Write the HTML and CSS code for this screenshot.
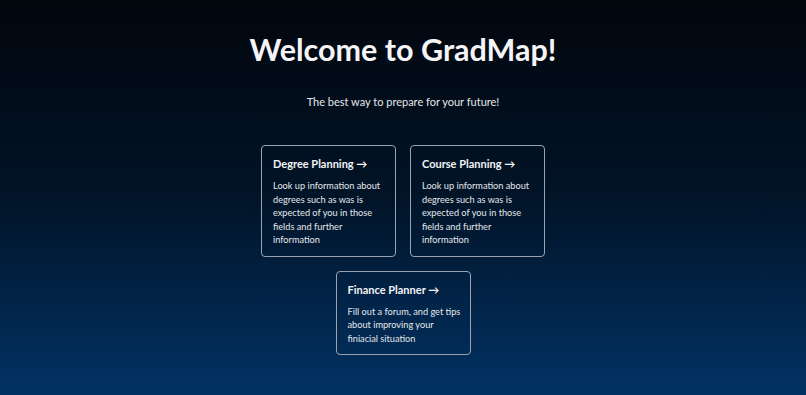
FILE: index.html
```html
<!DOCTYPE html>
<html lang="en">
<head>
    <meta charset="UTF-8">
    <meta name="viewport" content="width=device-width, initial-scale=1.0">
    <title>GradMap</title>
    <link rel="stylesheet" href="styles.css">
</head>
<body>
    <main class="home">
        <h1 class="title">Welcome to GradMap!</h1>
        <p class="tagline">The best way to prepare for your future!</p>
        <div class="cards">
            <a class="card" href="#">
                <h2>Degree Planning &rarr;</h2>
                <p>Look up information about degrees such as was is expected of you in those fields and further information</p>
            </a>
            <a class="card" href="#">
                <h2>Course Planning &rarr;</h2>
                <p>Look up information about degrees such as was is expected of you in those fields and further information</p>
            </a>
            <a class="card" href="#">
                <h2>Finance Planner &rarr;</h2>
                <p>Fill out a forum, and get tips about improving your finiacial situation</p>
            </a>
        </div>
    </main>
</body>
</html>
```

FILE: styles.css
```css
html, body {
    margin: 0;
    min-height: 100vh;
}
body {
    font-family: Lato, "Noto Sans", sans-serif;
    color: #f3f4f6;
    background: linear-gradient(to bottom, #02060d 0%, #011428 50%, #023264 100%);
}
.home {
    display: flex;
    flex-direction: column;
    align-items: center;
    padding-top: 26px;
}
.title {
    margin: 0;
    font-size: 30.5px;
    font-weight: 700;
    line-height: 46px;
    color: #f5f5f7;
}
.tagline {
    margin: 22px 0 0;
    font-size: 11px;
    line-height: 16px;
    color: #e5e7eb;
}
.cards {
    display: flex;
    flex-wrap: wrap;
    justify-content: center;
    gap: 14px 14px;
    width: 284px;
    margin-top: 35px;
}
.card {
    box-sizing: border-box;
    width: 135px;
    padding: 10px 6px 9px 11px;
    border: 1px solid #9ca3af;
    border-radius: 4px;
    color: inherit;
    text-decoration: none;
}
.card h2 {
    margin: 0 0 7px;
    font-size: 11px;
    font-weight: 700;
    line-height: 16px;
}
.card p {
    margin: 0;
    font-size: 9.2px;
    line-height: 13.5px;
    color: #e5e7eb;
}
```
